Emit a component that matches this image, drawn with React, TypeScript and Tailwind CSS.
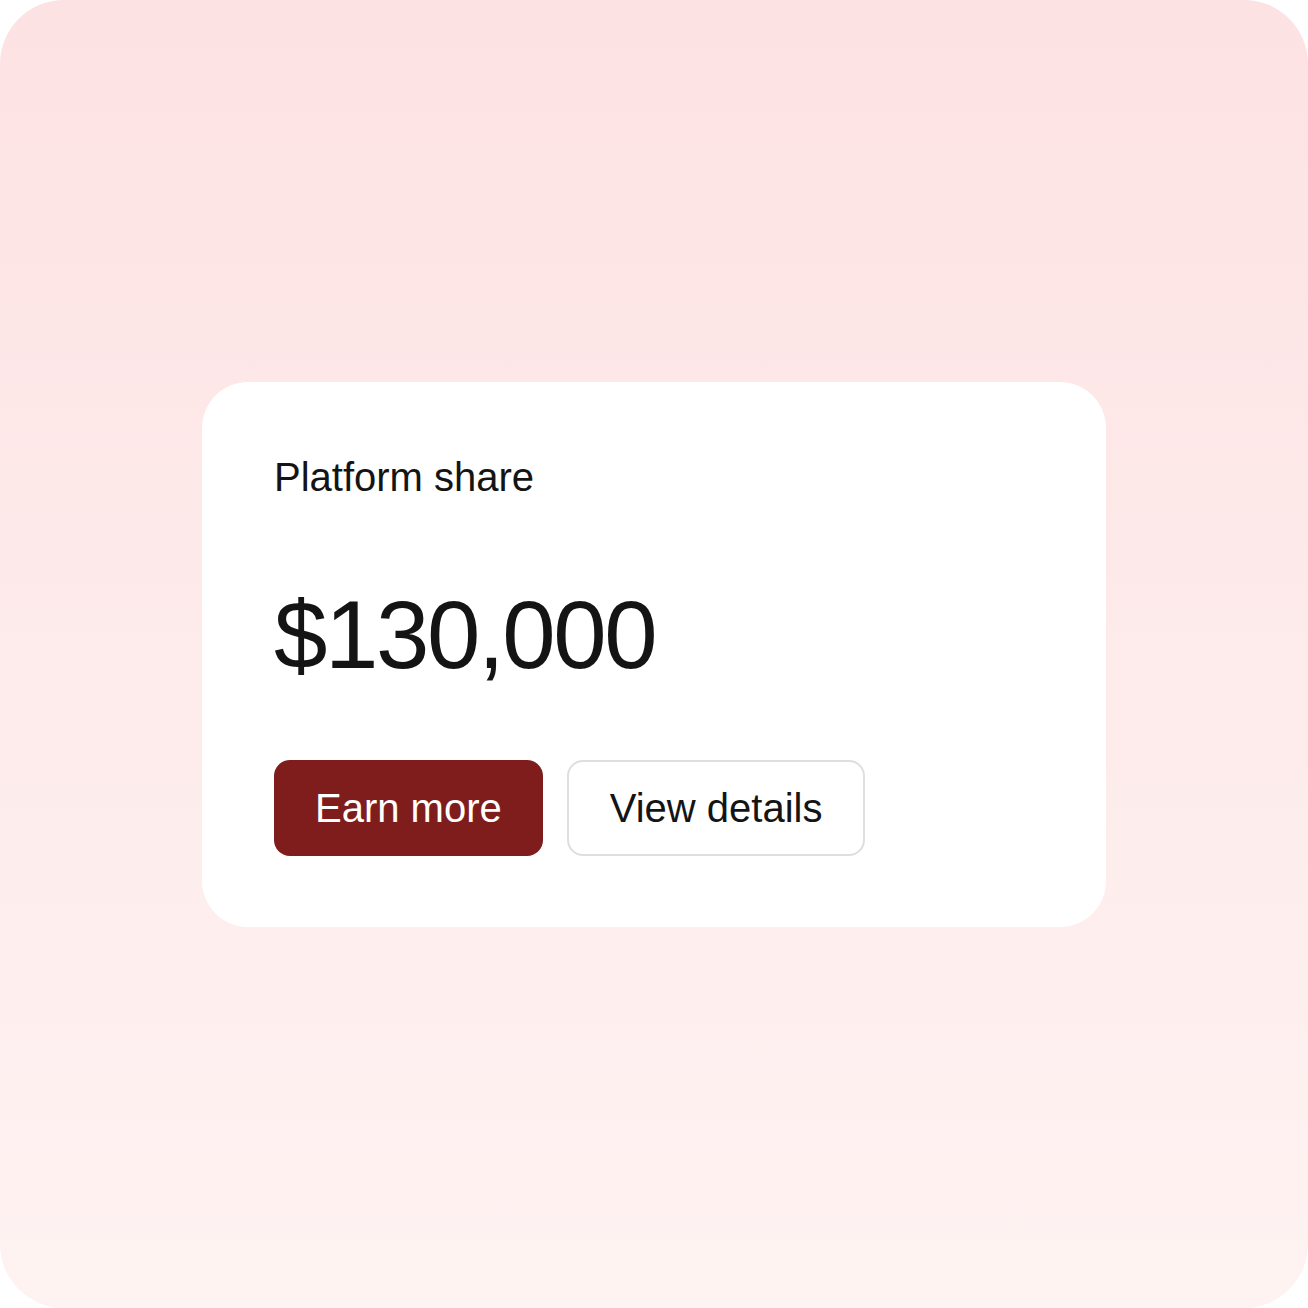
export default function App() {
  return (
    <div className="w-[1308px] h-[1308px] bg-white">
      <div
        className="w-full h-full rounded-[64px] bg-gradient-to-b from-[#fde2e3] to-[#fef3f2] flex items-center justify-center"
        style={{ fontFamily: '"Liberation Sans", Arial, sans-serif' }}
      >
        <div className="w-[904px] bg-white rounded-[46px] px-[72px] pt-[75px] pb-[71px] flex flex-col">
          <div className="text-[40px] leading-[40px] text-[#141414]">Platform share</div>
          <div className="mt-[90px] text-[96px] leading-[96px] tracking-[-0.025em] text-[#141414]">
            $130,000
          </div>
          <div className="mt-[77px] flex gap-[24px]">
            <button className="h-[96px] px-[41px] rounded-[16px] bg-[#7f1d1d] text-white text-[40px] leading-none flex items-center">
              Earn more
            </button>
            <button className="h-[96px] px-[41px] rounded-[16px] bg-white border-2 border-[#dedede] text-[#141414] text-[40px] leading-none flex items-center">
              View details
            </button>
          </div>
        </div>
      </div>
    </div>
  );
}
